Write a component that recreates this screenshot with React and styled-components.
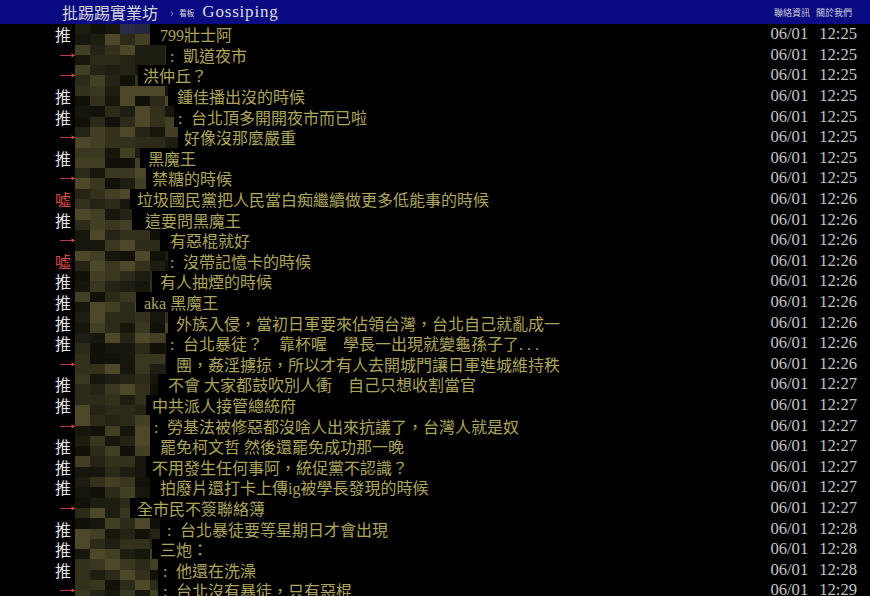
import React from "react";
import styled, { createGlobalStyle } from "styled-components";

const GlobalStyle = createGlobalStyle`
  html, body {
    margin: 0;
    padding: 0;
    background: #000;
  }
  body {
    font-family: "Liberation Serif", "Noto Sans CJK TC", serif;
    overflow: hidden;
  }
`;

// [tag, mosaicEnd, textStart, colon, text, time]
const pushes = [
  ["推", 150, 160, false, "799壯士阿", "12:25"],
  ["→", 166, 170, true, "凱道夜市", "12:25"],
  ["→", 138, 143, false, "洪仲丘？", "12:25"],
  ["推", 168, 177, false, "鍾佳播出沒的時候", "12:25"],
  ["推", 174, 178, true, "台北頂多開開夜市而已啦", "12:25"],
  ["→", 178, 184, false, "好像沒那麼嚴重", "12:25"],
  ["推", 140, 148, false, "黑魔王", "12:25"],
  ["→", 146, 152, false, "禁糖的時候", "12:25"],
  ["噓", 130, 137, false, "垃圾國民黨把人民當白痴繼續做更多低能事的時候", "12:26"],
  ["推", 132, 145, false, "這要問黑魔王", "12:26"],
  ["→", 160, 170, false, "有惡棍就好", "12:26"],
  ["噓", 168, 170, true, "沒帶記憶卡的時候", "12:26"],
  ["推", 152, 160, false, "有人抽煙的時候", "12:26"],
  ["推", 136, 144, false, "aka 黑魔王", "12:26"],
  ["推", 168, 176, false, "外族入侵，當初日軍要來佔領台灣，台北自己就亂成一", "12:26"],
  ["推", 166, 170, true, "台北暴徒？　靠杯喔　學長一出現就變龜孫子了. . .", "12:26"],
  ["→", 166, 176, false, "團，姦淫擄掠，所以才有人去開城門讓日軍進城維持秩", "12:26"],
  ["推", 158, 168, false, "不會 大家都鼓吹別人衝　自己只想收割當官", "12:27"],
  ["推", 146, 152, false, "中共派人接管總統府", "12:27"],
  ["→", 150, 154, true, "勞基法被修惡都沒啥人出來抗議了，台灣人就是奴", "12:27"],
  ["推", 150, 160, false, "罷免柯文哲 然後還罷免成功那一晚", "12:27"],
  ["推", 146, 152, false, "不用發生任何事阿，統促黨不認識？", "12:27"],
  ["推", 150, 160, false, "拍廢片還打卡上傳ig被學長發現的時候", "12:27"],
  ["→", 130, 137, false, "全市民不簽聯絡簿", "12:27"],
  ["推", 160, 167, true, "台北暴徒要等星期日才會出現", "12:28"],
  ["推", 152, 160, false, "三炮：", "12:28"],
  ["推", 158, 163, true, "他還在洗澡", "12:28"],
  ["→", 158, 163, true, "台北沒有暴徒，只有惡棍", "12:29"],
];

const shades = [
  "#111109", "#17160d", "#1e1d11", "#252315", "#2c2a18",
  "#33301c", "#3a3720", "#433f25", "#4d482a",
];

// deterministic noise so the mosaic looks the same every load
const noise = (a, b) => {
  let h = (a * 374761393 + b * 668265263) | 0;
  h = (h ^ (h >>> 13)) * 1274126177;
  h = h ^ (h >>> 16);
  return Math.abs(h) % 1000 / 1000;
};

const Page = styled.div`
  width: 870px;
  height: 596px;
  background: #000;
  overflow: hidden;
`;

const TopBar = styled.div`
  height: 24px;
  background: #0a0a82;
  display: flex;
  align-items: center;
  padding: 0 18px 0 62px;
  color: #e0e0e0;
`;

const Brand = styled.span`
  font-family: "Noto Sans CJK TC", sans-serif;
  font-size: 16px;
  line-height: 24px;
  color: #d6d6d6;
`;

const Crumb = styled.span`
  font-family: "Noto Sans CJK TC", sans-serif;
  font-size: 11px;
  color: #b8b8c8;
  margin: 0 6px 0 12px;
`;

const BoardLabel = styled.span`
  font-family: "Noto Sans CJK TC", sans-serif;
  font-size: 7.5px;
  color: #d8d8d8;
  margin-right: 8px;
`;

const BoardName = styled.span`
  font-family: "Liberation Serif", serif;
  font-size: 17px;
  color: #dcdcdc;
  letter-spacing: 0.8px;
`;

const TopLinks = styled.div`
  margin-left: auto;
  display: flex;
  gap: 6px;
  font-family: "Noto Sans CJK TC", sans-serif;
  font-size: 9px;
  color: #cfcfd8;
`;

const List = styled.div`
  display: flex;
  flex-direction: column;
`;

const Row = styled.div`
  height: 20.6px;
  display: flex;
  align-items: center;
  padding: 0 13px 0 55px;
  font-size: 16px;
  white-space: nowrap;
`;

const Tag = styled.span`
  width: 20px;
  flex: 0 0 20px;
  font-family: "Noto Sans CJK TC", sans-serif;
  font-size: 16px;
  line-height: 20px;
  color: ${(p) => (p.$kind === "推" ? "#e4e4e4" : "#d84c4c")};
`;

const Arrow = styled.span`
  display: inline-block;
  font-family: "Liberation Serif", serif;
  font-size: 16px;
  transform: translateY(-3px) scaleX(1.6);
  transform-origin: left center;
`;

const Mosaic = styled.span`
  display: flex;
  height: 100%;
  overflow: hidden;
  flex: 0 0 auto;
`;

const Cell = styled.span`
  flex: 0 0 15px;
  display: flex;
  flex-direction: column;
`;

const Pixel = styled.span`
  flex: 1;
`;

const Content = styled.span`
  flex: 1;
  color: #ada55c;
  font-family: "Liberation Serif", "Noto Sans CJK TC", serif;
  overflow: hidden;
`;

const Colon = styled.span`
  display: inline-block;
  width: 13px;
`;

const Stamp = styled.span`
  display: flex;
  gap: 11px;
  color: #c4c4c4;
  font-family: "Liberation Serif", serif;
  font-size: 16.6px;
`;

const MosaicBlock = ({ row, width }) => {
  const cols = Math.ceil(width / 15);
  return (
    <Mosaic style={{ width }}>
      {Array.from({ length: cols }, (_, c) => (
        <Cell key={c}>
          {[0, 1].map((h) => {
            const n = noise(row * 2 + h + (c % 2), c + 3);
            let color = shades[Math.floor(n * shades.length)];
            if (row === 0 && h === 0 && c === 3) color = "#2c2c48";
            if (row === 0 && h === 0 && c === 4) color = "#26263c";
            return <Pixel key={h} style={{ background: color }} />;
          })}
        </Cell>
      ))}
    </Mosaic>
  );
};

export default function App() {
  return (
    <Page>
      <GlobalStyle />
      <TopBar>
        <Brand>批踢踢實業坊</Brand>
        <Crumb>›</Crumb>
        <BoardLabel>看板</BoardLabel>
        <BoardName>Gossiping</BoardName>
        <TopLinks>
          <span>聯絡資訊</span>
          <span>關於我們</span>
        </TopLinks>
      </TopBar>
      <List>
        {pushes.map(([tag, end, start, colon, text, time], i) => (
          <Row key={i}>
            <Tag $kind={tag}>{tag === "→" ? <Arrow>→</Arrow> : tag}</Tag>
            <MosaicBlock row={i} width={end - 75} />
            <Content style={{ paddingLeft: start - end }}>
              {colon && <Colon>:</Colon>}
              {text}
            </Content>
            <Stamp>
              <span>06/01</span>
              <span>{time}</span>
            </Stamp>
          </Row>
        ))}
      </List>
    </Page>
  );
}
